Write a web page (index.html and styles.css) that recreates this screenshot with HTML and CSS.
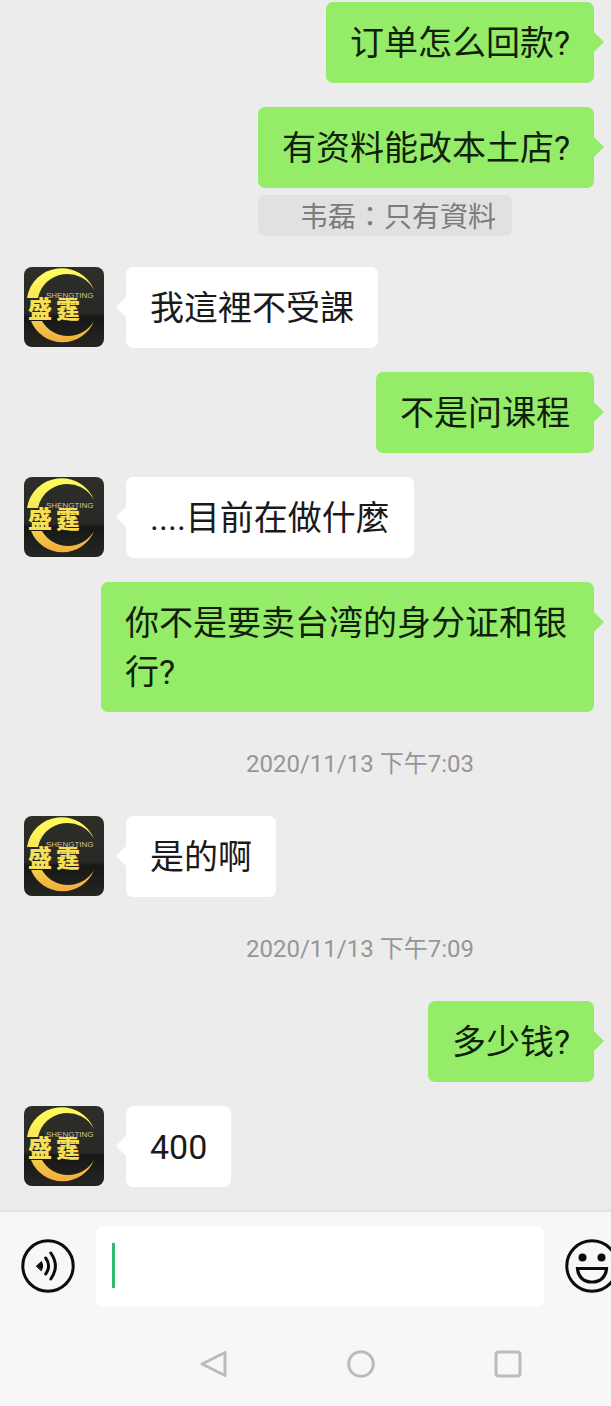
FILE: index.html
```html
<!DOCTYPE html>
<html lang="zh">
<head>
<meta charset="utf-8">
<meta name="viewport" content="width=device-width, initial-scale=1">
<title>聊天</title>
<link rel="stylesheet" href="styles.css">
</head>
<body>
<svg class="defs" aria-hidden="true">
  <defs>
    <linearGradient id="gold" x1="0" y1="0" x2="0" y2="80" gradientUnits="userSpaceOnUse">
      <stop offset="0.1" stop-color="#fff95c"/>
      <stop offset="0.5" stop-color="#f6df50"/>
      <stop offset="1" stop-color="#f2a63a"/>
    </linearGradient>
    <linearGradient id="night" x1="0" y1="0" x2="0" y2="1">
      <stop offset="0" stop-color="#2e2e29"/>
      <stop offset="0.58" stop-color="#282825"/>
      <stop offset="0.62" stop-color="#171716"/>
      <stop offset="1" stop-color="#252522"/>
    </linearGradient>
    <symbol id="logo" viewBox="0 0 80 80">
      <rect width="80" height="80" fill="url(#night)"/>
      <g fill="url(#gold)">
        <path d="M3 31A35 35 0 0 1 70 23A30 30 0 0 0 14 31Z"/>
        <path d="M7 54H18A30 30 0 0 0 70 54A34 34 0 0 1 7 54Z"/>
      </g>
      <text class="logo-latin" x="22" y="31">SHENGTING</text>
      <text class="logo-name" x="4" y="51">盛</text>
      <text class="logo-name" x="32" y="51">霆</text>
    </symbol>
  </defs>
</svg>
<main class="chat">
  <div class="row sent"><p class="bubble">订单怎么回款?</p></div>
  <div class="row sent quoted">
    <div class="stack">
      <p class="bubble">有资料能改本土店?</p>
      <p class="quote" lang="zh-Hant">韦磊：只有資料</p>
    </div>
  </div>
  <div class="row received"><svg class="avatar" role="img" aria-label="盛霆"><use href="#logo"/></svg><p class="bubble">我這裡不受課</p></div>
  <div class="row sent"><p class="bubble">不是问课程</p></div>
  <div class="row received"><svg class="avatar" role="img" aria-label="盛霆"><use href="#logo"/></svg><p class="bubble">....目前在做什麼</p></div>
  <div class="row sent"><p class="bubble">你不是要卖台湾的身分证和银行?</p></div>
  <time class="stamp" datetime="2020-11-13T19:03">2020/11/13 下午7:03</time>
  <div class="row received"><svg class="avatar" role="img" aria-label="盛霆"><use href="#logo"/></svg><p class="bubble">是的啊</p></div>
  <time class="stamp" datetime="2020-11-13T19:09">2020/11/13 下午7:09</time>
  <div class="row sent"><p class="bubble">多少钱?</p></div>
  <div class="row received"><svg class="avatar" role="img" aria-label="盛霆"><use href="#logo"/></svg><p class="bubble">400</p></div>
</main>
<footer class="dock">
  <div class="composer">
    <button class="tool" type="button" aria-label="语音">
      <svg viewBox="0 0 54 54" fill="none" stroke="#0c0c0c" stroke-linecap="round">
        <circle cx="27" cy="27" r="25.2" stroke-width="3"/>
        <path d="M15.5 27L20.5 22.5Q23 27 20.5 31.5Z" fill="#0c0c0c" stroke="#0c0c0c" stroke-width="1" stroke-linejoin="round"/>
        <path d="M24.7 19Q30.5 27 24.7 35" stroke-width="3"/>
        <path d="M29.8 14Q39 27 29.8 40" stroke-width="3"/>
      </svg>
    </button>
    <div class="field">
      <input class="entry" type="text" aria-label="消息">
      <span class="caret"></span>
    </div>
    <button class="tool emoji" type="button" aria-label="表情">
      <svg viewBox="0 0 54 54" fill="none" stroke="#0c0c0c">
        <circle cx="27" cy="27" r="25.2" stroke-width="3"/>
        <circle cx="17.5" cy="18.5" r="4" fill="#0c0c0c" stroke="none"/>
        <circle cx="36.5" cy="18.5" r="4" fill="#0c0c0c" stroke="none"/>
        <path d="M12.5 29.5H41.5C41 38 35 43 27 43S13 38 12.5 29.5Z" stroke-width="3.2"/>
      </svg>
    </button>
  </div>
  <nav class="system">
    <button class="key" type="button" aria-label="返回"><svg viewBox="0 0 28 28"><path d="M26 2.5V25.5L3 14Z"/></svg></button>
    <button class="key" type="button" aria-label="主页"><svg viewBox="0 0 28 28"><circle cx="14" cy="14" r="12.3"/></svg></button>
    <button class="key" type="button" aria-label="最近任务"><svg viewBox="0 0 28 28"><rect x="2" y="2" width="24" height="24" rx="2.5"/></svg></button>
  </nav>
</footer>
</body>
</html>
```
FILE: styles.css
```css
* {
  box-sizing: border-box;
}

body {
  margin: 0;
  min-height: 100vh;
  display: flex;
  flex-direction: column;
  background: #ececec;
  color: #1a1a1a;
  font-family: Roboto, "Noto Sans CJK SC", sans-serif;
  overflow-x: hidden;
}

p {
  margin: 0;
}

button {
  padding: 0;
  border: 0;
  background: none;
}

button svg {
  display: block;
  width: 100%;
  height: 100%;
}

.defs {
  position: absolute;
  width: 0;
  height: 0;
}

.chat {
  flex: 1;
  display: flex;
  flex-direction: column;
  gap: 24px;
  padding: 2px 17px 23px 24px;
}

.row {
  display: flex;
  align-items: flex-start;
  gap: 22px;
}

.sent {
  justify-content: flex-end;
}

.quoted {
  margin-bottom: 7px;
}

.bubble {
  position: relative;
  max-width: 493px;
  padding: 17px 24px 15px;
  border-radius: 7px;
  background: #fff;
  font-size: 34px;
  line-height: 49px;
}

.sent .bubble {
  background: #95ec69;
  color: #10200a;
}

.bubble::before {
  content: "";
  position: absolute;
  top: 29px;
  left: -10px;
  width: 11px;
  height: 22px;
  background: inherit;
  clip-path: polygon(0 50%, 100% 0, 100% 100%);
}

.sent .bubble::before {
  left: auto;
  right: -10px;
  clip-path: polygon(100% 50%, 0 0, 0 100%);
}

.stack {
  display: flex;
  flex-direction: column;
  align-items: flex-start;
  gap: 7px;
}

.quote {
  padding: 0 16px 0 42px;
  border-radius: 7px;
  background: #e1e1e1;
  color: #7c7c7c;
  font-family: "Noto Sans CJK TC", sans-serif;
  font-size: 28px;
  line-height: 41px;
}

.avatar {
  flex: none;
  width: 80px;
  height: 80px;
  border-radius: 8px;
}

.logo-latin {
  font: 8px "Liberation Sans", sans-serif;
  fill: #cfc69a;
}

.logo-name {
  font: 900 24px "Noto Sans CJK TC", sans-serif;
  fill: #f8de55;
}

.stamp {
  padding-left: 102px;
  align-self: center;
  color: #969696;
  font-size: 24px;
  line-height: 56px;
}

.dock {
  background: #f7f7f7;
  border-top: 2px solid #e4e4e4;
  overflow: hidden;
}

.composer {
  display: flex;
  align-items: center;
  gap: 21px;
  padding: 14px 0 0 21px;
}

.tool {
  flex: none;
  width: 54px;
  height: 54px;
}

.emoji {
  margin-right: -8px;
}

.field {
  position: relative;
  flex: 1;
  min-width: 0;
}

.entry {
  display: block;
  width: 100%;
  height: 80px;
  padding: 0 16px;
  border: 0;
  border-radius: 7px;
  background: #fff;
  font: inherit;
  font-size: 34px;
}

.caret {
  position: absolute;
  top: 17px;
  left: 16px;
  width: 3px;
  height: 45px;
  background: #2dbb70;
}

.system {
  display: flex;
  justify-content: space-between;
  padding: 44px 89px 28px 199px;
}

.key {
  width: 28px;
  height: 28px;
}

.key svg {
  fill: none;
  stroke: #bbb;
  stroke-width: 3;
  stroke-linejoin: round;
}
```
